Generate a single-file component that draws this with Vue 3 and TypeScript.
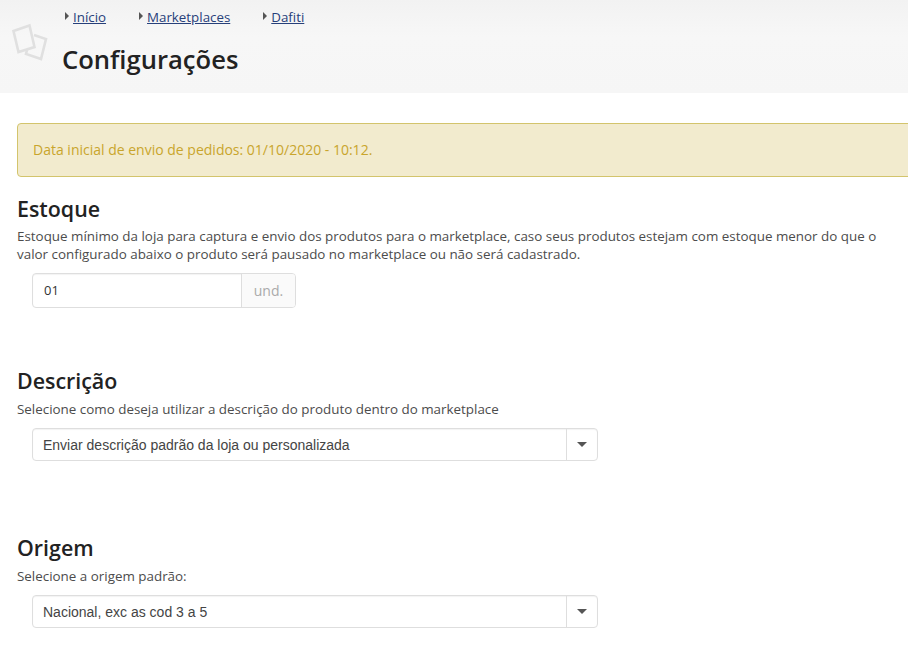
<script setup lang="ts">
const crumbs: string[] = ['Início', 'Marketplaces', 'Dafiti']
</script>

<template>
  <div class="page">
    <header class="head">
      <svg class="logo" width="44" height="44" viewBox="0 0 44 44" fill="none" stroke="#e0e0e0" stroke-width="2.6">
        <path d="M5.5 11 L21.5 5.5 L26.5 27 L10.5 32 Z" />
        <path d="M26 15 L38 19 L33 39 L18 34 L19 30" />
      </svg>
      <div class="head-text">
        <nav class="crumbs">
          <span v-for="c in crumbs" :key="c" class="crumb"><i class="arrow"></i><a href="#">{{ c }}</a></span>
        </nav>
        <h1>Configurações</h1>
      </div>
    </header>

    <main class="content">
      <div class="alert">Data inicial de envio de pedidos: 01/10/2020 - 10:12.</div>

      <section class="sec sec-stock">
        <h2>Estoque</h2>
        <p>Estoque mínimo da loja para captura e envio dos produtos para o marketplace, caso seus produtos estejam com estoque menor do que o valor configurado abaixo o produto será pausado no marketplace ou não será cadastrado.</p>
        <div class="group">
          <div class="input">01</div>
          <div class="addon">und.</div>
        </div>
      </section>

      <section class="sec sec-desc">
        <h2>Descrição</h2>
        <p>Selecione como deseja utilizar a descrição do produto dentro do marketplace</p>
        <div class="select">
          <span class="value">Enviar descrição padrão da loja ou personalizada</span>
          <span class="caret-box"><i class="caret"></i></span>
        </div>
      </section>

      <section class="sec sec-orig">
        <h2>Origem</h2>
        <p>Selecione a origem padrão:</p>
        <div class="select">
          <span class="value">Nacional, exc as cod 3 a 5</span>
          <span class="caret-box"><i class="caret"></i></span>
        </div>
      </section>
    </main>
  </div>
</template>

<style>
html, body { margin: 0; overflow: hidden; background: #fff; }
</style>

<style scoped>
.page {
  width: 908px;
  height: 652px;
  overflow: hidden;
  font-family: "Open Sans", sans-serif;
  color: #4c4c4c;
}
.head {
  height: 93px;
  box-sizing: border-box;
  background: linear-gradient(#f2f2f2, #f7f7f7 40%, #f6f6f6);
  display: flex;
}
.logo { margin: 20px 0 0 8px; flex: none; }
.head-text { margin-left: 10px; }
.crumbs { display: flex; height: 42px; padding-top: 8px; box-sizing: border-box; margin-left: 3px; }
.crumb { display: flex; align-items: center; height: 18px; font-size: 13.33px; margin-right: 33px; }
.crumb a { color: #27407a; text-decoration: underline; }
.arrow {
  width: 0; height: 0; margin-right: 4px;
  border-left: 4px solid #555;
  border-top: 4px solid transparent;
  border-bottom: 4px solid transparent;
  margin-top: -2px;
}
h1 {
  margin: 0;
  font-size: 25.6px;
  line-height: 36px;
  font-weight: 600;
  color: #222;
}
.content { padding: 30px 0 0 17px; }
.alert {
  width: 960px;
  height: 54px;
  box-sizing: border-box;
  background: #f2ebce;
  border: 1px solid #d3c46c;
  border-radius: 4px;
  color: #c9a52c;
  font-size: 14px;
  line-height: 52px;
  padding-left: 15px;
}
.sec h2 {
  margin: 0;
  font-size: 21.4px;
  line-height: 30px;
  font-weight: 600;
  color: #222;
}
.sec p {
  margin: 5px 0 0;
  width: 875px;
  font-size: 13.4px;
  line-height: 17px;
}
.sec-stock p { margin-top: 4px; line-height: 17.5px; }
.sec-stock { margin-top: 17px; }
.sec-desc { margin-top: 58px; }
.sec-orig { margin-top: 72px; }
.group {
  display: flex;
  margin: 10px 0 0 15px;
  width: 264px;
  height: 35px;
  box-sizing: border-box;
  border: 1px solid #dedede;
  border-radius: 4px;
  overflow: hidden;
  box-shadow: inset 0 1px 1px rgba(0, 0, 0, 0.05);
}
.input {
  flex: 1;
  padding-left: 11px;
  font-size: 13px;
  line-height: 33px;
  color: #333;
}
.addon {
  width: 54px;
  box-sizing: border-box;
  border-left: 1px solid #dedede;
  background: #fafafa;
  color: #aaa;
  font-size: 14px;
  line-height: 33px;
  text-align: center;
}
.select {
  display: flex;
  margin: 10px 0 0 15px;
  width: 566px;
  height: 33px;
  box-sizing: border-box;
  border: 1px solid #dedede;
  border-radius: 4px;
  box-shadow: inset 0 1px 1px rgba(0, 0, 0, 0.05);
}
.value {
  flex: 1;
  padding-left: 10px;
  font-family: "Liberation Sans", Arial, sans-serif;
  font-size: 14px;
  line-height: 32px;
  color: #444;
}
.caret-box {
  width: 30px;
  border-left: 1px solid #dedede;
  display: flex;
  align-items: center;
  justify-content: center;
}
.caret {
  width: 0; height: 0;
  border-top: 5px solid #555;
  border-left: 5px solid transparent;
  border-right: 5px solid transparent;
}
</style>
